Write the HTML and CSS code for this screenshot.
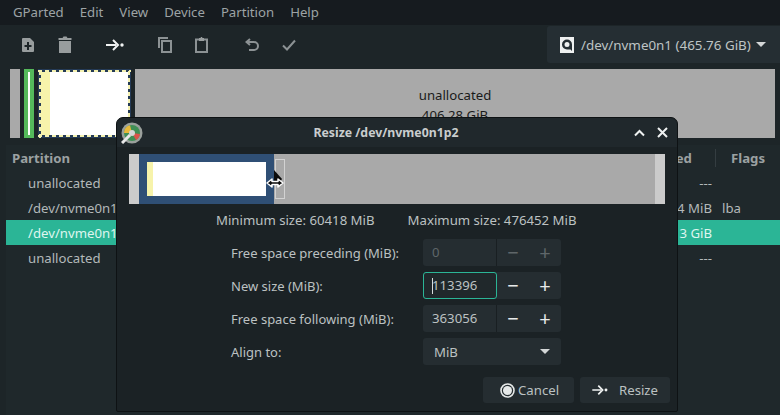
FILE: index.html
```
<!DOCTYPE html>
<html lang="en">
<head>
<meta charset="utf-8">
<title>GParted</title>
<link rel="stylesheet" href="styles.css">
</head>
<body>
<div class="app">
  <nav class="menubar">
    <span>GParted</span><span>Edit</span><span>View</span><span>Device</span><span>Partition</span><span>Help</span>
  </nav>
  <div class="toolbar">
    <div class="tools">
      <span class="tool"><svg width="14" height="16" viewBox="0 0 14 16"><path class="dim" fill-rule="evenodd" d="M2 1h7l4 4v9a1 1 0 0 1-1 1H2a1 1 0 0 1-1-1V2a1 1 0 0 1 1-1zM6 5v3H3.500v2H6v3h2v-3h2.500V8H8V5z"/></svg></span>
      <span class="tool"><svg width="16" height="17" viewBox="0 0 16 17"><path class="dim" d="M1.500 2H5.500L6.500 .5h3L10.500 2h4v2h-13zM2 5h12v12H2z"/></svg></span>
      <span class="tool sep"><svg width="18" height="14" viewBox="0 0 18 14"><path class="bright-line" d="M0 7h10M7 2l5 5-5 5"/><circle class="bright" cx="16" cy="7" r="1.700"/></svg></span>
      <span class="tool sep"><svg width="14" height="16" viewBox="0 0 14 16"><path class="dim-line" d="M1 11V1h9M4 4h9v11H4z"/></svg></span>
      <span class="tool"><svg width="13" height="16" viewBox="0 0 13 16"><path class="dim-line" d="M4 2.500H1V15h11V2.500H9"/><path class="dim" d="M4 1h1.500l.5-1h1l.5 1H9v3H4z"/></svg></span>
      <span class="tool sep"><svg width="14" height="14" viewBox="0 0 14 14"><path class="dim-line" d="M5 1L1.500 4 5 7M2 4h7a3.500 3.500 0 0 1 0 8H4"/></svg></span>
      <span class="tool"><svg width="14" height="12" viewBox="0 0 14 12"><path class="dim-line" d="M1 6.500l4 4L13 1.500"/></svg></span>
    </div>
    <div class="device">
      <svg width="14" height="16" viewBox="0 0 14 16"><path class="white" fill-rule="evenodd" d="M0 0h14v16H0zM7 2.500a5 5 0 1 0 0 10h3.500L12 14V7.500a5 5 0 0 0-5-5zM7 5a2.500 2.500 0 1 1 0 5 2.500 2.500 0 0 1 0-5z"/></svg>
      <span>/dev/nvme0n1 (465.76 GiB)</span>
      <i class="caret"></i>
    </div>
  </div>
  <div class="diskmap">
    <div class="seg seg-gap"></div>
    <div class="seg seg-fat"><b></b></div>
    <div class="seg seg-root"><div class="root-fill"><i></i></div></div>
    <div class="seg seg-free"><span>unallocated</span><span>406.28 GiB</span></div>
  </div>
  <section class="table">
    <div class="row head"><span class="c-name">Partition</span><span class="c-unused">Unused</span><span class="c-flags">Flags</span></div>
    <div class="row"><span class="c-name in">unallocated</span><span class="c-unused">---</span><span class="c-flags"></span></div>
    <div class="row"><span class="c-name in">/dev/nvme0n1p1</span><span class="c-unused">4 MiB</span><span class="c-flags">lba</span></div>
    <div class="row selected"><span class="c-name in">/dev/nvme0n1p2</span><span class="c-unused">3 GiB</span><span class="c-flags"></span></div>
    <div class="row"><span class="c-name in">unallocated</span><span class="c-unused">---</span><span class="c-flags"></span></div>
  </section>
</div>

<div class="dialog">
  <header class="titlebar">
    <svg class="logo" width="22" height="22" viewBox="0 0 22 22">
      <circle cx="11" cy="11" r="10.500" fill="#9aa09c"/>
      <circle cx="11" cy="11" r="8" fill="#3f8f55"/>
      <path d="M3 11a8 8 0 0 1 6-7.700L11 11z" fill="#e8b93a"/>
      <path d="M11 11l8 1a8 8 0 0 1-4 6z" fill="#d9534a"/>
      <circle cx="11" cy="11" r="3" fill="#d5d5d5"/>
      <path d="M1 21l8-8" stroke="#e8e8e8" stroke-width="3"/>
    </svg>
    <h1>Resize /dev/nvme0n1p2</h1>
    <svg class="winbtn up" width="11" height="8" viewBox="0 0 11 8"><path d="M1 6.500l4.500-4.500L10 6.500" fill="none" stroke="#eef1f1" stroke-width="2"/></svg>
    <svg class="winbtn" width="11" height="11" viewBox="0 0 11 11"><path d="M1 1l9 9M10 1l-9 9" fill="none" stroke="#eef1f1" stroke-width="2"/></svg>
  </header>
  <div class="preview">
    <div class="pv-edge"></div>
    <div class="pv-part"><div class="pv-fill"><i></i></div></div>
    <div class="pv-rest"><div class="pv-handle"></div></div>
    <div class="pv-edge"></div>
    <svg class="cursor" width="22" height="24" viewBox="0 0 22 24">
      <path d="M9 0l8 9-2 3H9z" fill="#0a0a0a"/>
      <path d="M2 13l5-4v2.500h6V9l5 4-5 4v-2.500H7V17z" fill="#0a0a0a" stroke="#fff" stroke-width="1.500" stroke-linejoin="round"/>
    </svg>
  </div>
  <div class="limits"><span>Minimum size: 60418 MiB</span><span>Maximum size: 476452 MiB</span></div>
  <div class="form">
    <label>Free space preceding (MiB):</label>
    <div class="spin off"><span class="field">0</span><span class="pm">&#8722;</span><span class="pm">+</span></div>
    <label>New size (MiB):</label>
    <div class="spin"><span class="field focus"><i class="text-cursor"></i>113396</span><span class="pm">&#8722;</span><span class="pm">+</span></div>
    <label>Free space following (MiB):</label>
    <div class="spin"><span class="field">363056</span><span class="pm">&#8722;</span><span class="pm">+</span></div>
    <label>Align to:</label>
    <div class="select"><span>MiB</span><i class="caret"></i></div>
  </div>
  <div class="actions">
    <button type="button"><svg width="15" height="15" viewBox="0 0 15 15"><circle cx="7.500" cy="7.500" r="6.500" fill="none" stroke="#e6e9e9" stroke-width="1.600"/><circle cx="7.500" cy="7.500" r="4.500" fill="#e6e9e9"/></svg>Cancel</button>
    <button type="button" class="wide"><svg width="16" height="12" viewBox="0 0 18 14"><path class="bright-line" d="M0 7h10M7 2l5 5-5 5"/><circle class="bright" cx="16" cy="7" r="1.700"/></svg>Resize</button>
  </div>
</div>
</body>
</html>
```
FILE: styles.css
```
* { box-sizing: border-box; }
html, body { margin: 0; padding: 0; }
body {
  width: 780px;
  height: 415px;
  overflow: hidden;
  position: relative;
  background: #1d2528;
  font-family: "Noto Sans", sans-serif;
  font-size: 13.2px;
  color: #b3b9ba;
}
svg { display: block; }
.dim { fill: #989d9e; }
.dim-line { fill: none; stroke: #8c9294; stroke-width: 2; }
.bright { fill: #f1f3f3; }
.bright-line { fill: none; stroke: #f1f3f3; stroke-width: 2; }
.white { fill: #eef0f0; }

.menubar {
  display: flex;
  height: 25px;
  align-items: center;
  gap: 16px;
  padding: 0 0 2px 13px;
  background: #161b1f;
  color: #9da3a5;
}
.toolbar {
  display: flex;
  justify-content: space-between;
  height: 38px;
  padding-top: 1px;
}
.tools { display: flex; padding-left: 9px; }
.tool {
  width: 37px;
  display: flex;
  align-items: center;
  justify-content: center;
}
.tool.sep { margin-left: 13px; }
.device {
  width: 233px;
  display: flex;
  align-items: center;
  gap: 7px;
  padding-left: 13px;
  background: #252e33;
  border-radius: 3px 0 0 3px;
  font-size: 13.4px;
  color: #bfc4c5;
}
.caret {
  display: block;
  width: 0;
  height: 0;
  border: 5px solid transparent;
  border-top: 5px solid #d3d6d7;
  border-bottom: 0;
}
.device .caret { margin-left: -2px; }

.diskmap {
  display: flex;
  gap: 4px;
  height: 69px;
  margin: 6px 5px 0 10px;
  color: #1a1a1a;
}
.seg-gap { width: 10px; background: #a9a9a9; }
.seg-fat {
  width: 10px;
  background: #55b95b;
  display: flex;
  justify-content: center;
  padding: 3px 0;
}
.seg-fat b { width: 2px; background: #fff; }
.seg-root {
  width: 93px;
  padding: 3px;
  background:
    repeating-linear-gradient(90deg, #f4f1b0 0 4px, transparent 4px 7px) 0 1px / 100% 2px no-repeat,
    repeating-linear-gradient(90deg, #f4f1b0 0 4px, transparent 4px 7px) 0 66px / 100% 2px no-repeat,
    repeating-linear-gradient(0deg, #f4f1b0 0 4px, transparent 4px 7px) 1px 0 / 2px 100% no-repeat,
    repeating-linear-gradient(0deg, #f4f1b0 0 4px, transparent 4px 7px) 90px 0 / 2px 100% no-repeat,
    #243a56;
}
.root-fill { height: 100%; background: #fff; }
.root-fill i { display: block; width: 9px; height: 100%; background: #f7f3ab; }
.seg-free {
  flex: 1;
  background: #a9a9a9;
  display: flex;
  flex-direction: column;
  align-items: center;
  padding: 16px 0 0 0;
  line-height: 20px;
}

.table {
  margin: 7px 0 0 6px;
  background: #1f282b;
  height: 270px;
}
.row {
  display: flex;
  height: 25px;
  align-items: center;
  white-space: nowrap;
}
.row.head { font-weight: 700; color: #9ba1a2; }
.c-name { width: 630px; padding-left: 6px; }
.c-name.in { padding-left: 22px; }
.c-unused { width: 80px; text-align: right; padding-right: 4px; }
.head .c-unused { text-align: left; padding-left: 6px; border-right: 1px solid #343d41; }
.c-flags { padding-left: 6px; }
.head .c-flags { padding-left: 15px; }
.selected { background: #2bb596; color: #dff5ef; }

.dialog {
  position: absolute;
  left: 116px;
  top: 117px;
  width: 562px;
  height: 295px;
  background: #1b2225;
  border: 1px solid #0e1214;
  border-radius: 7px 7px 2px 2px;
  color: #bcc1c2;
}
.titlebar {
  display: flex;
  align-items: center;
  height: 29px;
  padding: 0 9px 0 4px;
  background: #20282c;
  border-radius: 7px 7px 0 0;
}
.titlebar h1 {
  flex: 1;
  margin: 0;
  font-size: 12.3px;
  font-weight: 700;
  text-align: center;
  color: #c9cdce;
  padding-right: 5px;
}
.winbtn.up { margin-right: 12px; }
.preview {
  display: flex;
  position: relative;
  height: 50px;
  margin: 7px 12px 0 12px;
  background: #a9a9a9;
}
.pv-edge { width: 10px; background: #cbcbcb; }
.pv-part { width: 135px; background: #2f4f75; padding: 8px; }
.pv-fill { height: 100%; background: #fff; }
.pv-fill i { display: block; width: 6px; height: 100%; background: #f7f3ab; }
.pv-rest { flex: 1; padding: 5px 0 5px 1px; }
.pv-handle { width: 10px; height: 100%; border: 1px solid #d2d2d2; }
.cursor { position: absolute; left: 136px; top: 16px; }
.limits {
  display: flex;
  gap: 33px;
  margin: 6px 0 0 99px;
  height: 20px;
  line-height: 20px;
  white-space: nowrap;
}
.form {
  display: grid;
  grid-template-columns: 192px 138px;
  grid-auto-rows: 27px;
  row-gap: 6px;
  align-items: center;
  margin: 9px 0 0 114px;
}
.form label { font-size: 13px; }
.spin, .select {
  display: flex;
  height: 27px;
  align-items: center;
  background: #252d31;
  border-radius: 3px;
}
.field {
  width: 74px;
  height: 27px;
  line-height: 27px;
  padding-left: 9px;
  border-right: 1px solid #191f22;
  position: relative;
}
.field.focus {
  border: 1px solid #2bb596;
  border-radius: 3px;
  line-height: 25px;
  padding-left: 8px;
  background: #20282b;
}
.text-cursor {
  position: absolute;
  left: 8px;
  top: 5px;
  width: 1px;
  height: 16px;
  background: #d8dcdc;
}
.pm {
  width: 32px;
  text-align: center;
  font-size: 20px;
  line-height: 27px;
  color: #e8eaea;
}
.off .field, .off .pm { color: #5f6669; }
.select { justify-content: space-between; padding: 0 11px 0 11px; }
.actions {
  display: flex;
  justify-content: flex-end;
  gap: 6px;
  margin: 12px 7px 0 0;
}
.actions button {
  display: flex;
  align-items: center;
  gap: 3px;
  width: 91px;
  height: 26px;
  padding: 0 0 0 17px;
  background: #252d31;
  border: 0;
  border-radius: 3px;
  font: inherit;
  color: #bcc1c2;
}
.actions .wide { width: 90px; gap: 11px; padding-left: 12px; }
```
